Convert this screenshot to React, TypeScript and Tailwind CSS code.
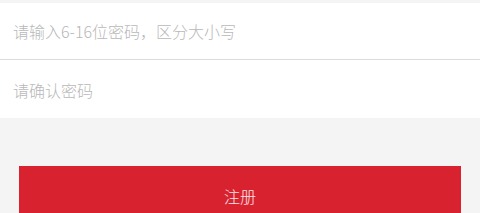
export default function App() {
  return (
    <div
      className="min-h-screen bg-[#f4f4f4] pt-[3px]"
      style={{ fontFamily: '"PingFang SC", "Noto Sans CJK SC", sans-serif' }}
    >
      <div className="bg-white">
        <input
          type="password"
          placeholder="请输入6-16位密码，区分大小写"
          className="block h-[57px] w-full border-b border-[#dcdcdc] bg-transparent px-[13px] text-[16px] font-light outline-none placeholder:text-[#b8b8b8]"
        />
        <input
          type="password"
          placeholder="请确认密码"
          className="block h-[58px] w-full bg-transparent px-[13px] pt-[1px] text-[16px] font-light outline-none placeholder:text-[#b8b8b8]"
        />
      </div>
      <div className="px-[19px] pt-[48px]">
        <button className="h-[60px] w-full bg-[#d9222f] text-[16px] font-light text-white/90">
          注册
        </button>
      </div>
    </div>
  );
}
